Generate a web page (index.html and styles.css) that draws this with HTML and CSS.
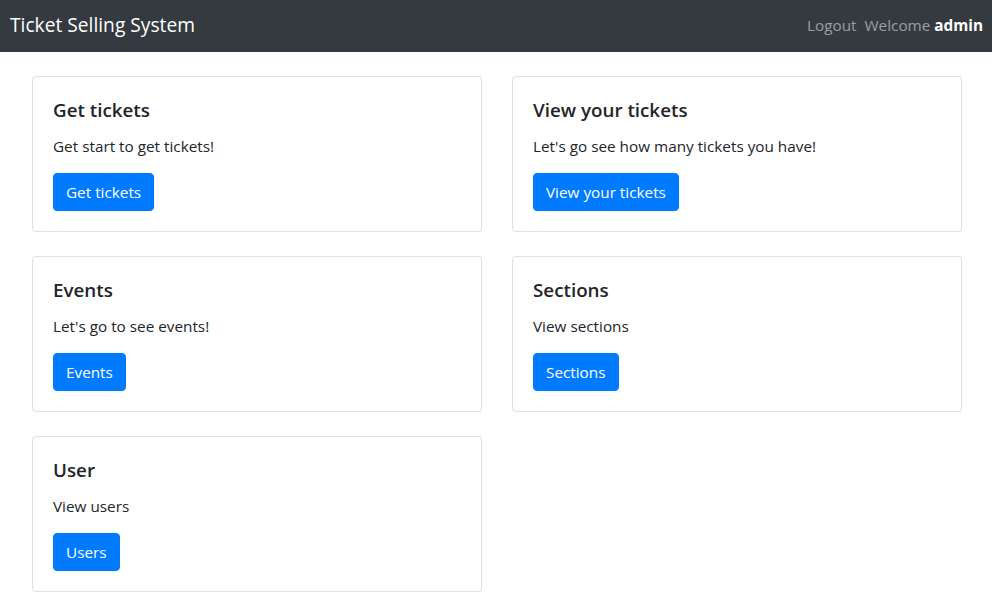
FILE: index.html
```html
<!DOCTYPE html>
<html lang="en">
<head>
<meta charset="utf-8">
<title>Ticket Selling System</title>
<link rel="stylesheet" href="styles.css">
</head>
<body>
<nav class="navbar">
  <a class="brand" href="#">Ticket Selling System</a>
  <div class="nav-right">
    <a class="nav-link" href="#">Logout</a>
    <span class="welcome">Welcome <b>admin</b></span>
  </div>
</nav>
<main class="grid">
  <div class="card">
    <h5 class="card-title">Get tickets</h5>
    <p class="card-text">Get start to get tickets!</p>
    <a class="btn" href="#">Get tickets</a>
  </div>
  <div class="card">
    <h5 class="card-title">View your tickets</h5>
    <p class="card-text">Let's go see how many tickets you have!</p>
    <a class="btn" href="#">View your tickets</a>
  </div>
  <div class="card">
    <h5 class="card-title">Events</h5>
    <p class="card-text">Let's go to see events!</p>
    <a class="btn" href="#">Events</a>
  </div>
  <div class="card">
    <h5 class="card-title">Sections</h5>
    <p class="card-text">View sections</p>
    <a class="btn" href="#">Sections</a>
  </div>
  <div class="card">
    <h5 class="card-title">User</h5>
    <p class="card-text">View users</p>
    <a class="btn" href="#">Users</a>
  </div>
</main>
</body>
</html>
```
FILE: styles.css
```css
* { box-sizing: border-box; }
html, body { margin: 0; }
body {
  font-family: "Open Sans", "Noto Sans", sans-serif;
  font-size: 15.3px;
  line-height: 24px;
  color: #212529;
  background: #fff;
}
.navbar {
  height: 52px;
  background: #343a40;
  display: flex;
  align-items: center;
  justify-content: space-between;
  padding: 0 9px 2px 10px;
}
.brand {
  color: #fff;
  font-size: 19.2px;
  line-height: 30px;
  text-decoration: none;
}
.nav-right { display: flex; gap: 8px; align-items: center; }
.nav-link, .welcome {
  color: rgba(255,255,255,.5);
  text-decoration: none;
}
.welcome b { color: #fff; font-weight: 700; }
.grid {
  display: grid;
  grid-template-columns: 450px 450px;
  column-gap: 30px;
  row-gap: 24px;
  padding: 24px 0 0 32px;
}
.card {
  border: 1px solid rgba(0,0,0,.125);
  border-radius: 4px;
  padding: 20px;
  height: 156px;
}
.card-title {
  margin: 0 0 12px;
  font-size: 18.8px;
  font-weight: 600;
  line-height: 24px;
  padding-top: 1px;
}
.card-text { margin: 0 0 15px; }
.btn {
  display: inline-block;
  background: #007bff;
  border: 1px solid #007bff;
  color: #fff;
  text-decoration: none;
  padding: 6px 12px;
  border-radius: 4px;
  line-height: 24px;
}
```
